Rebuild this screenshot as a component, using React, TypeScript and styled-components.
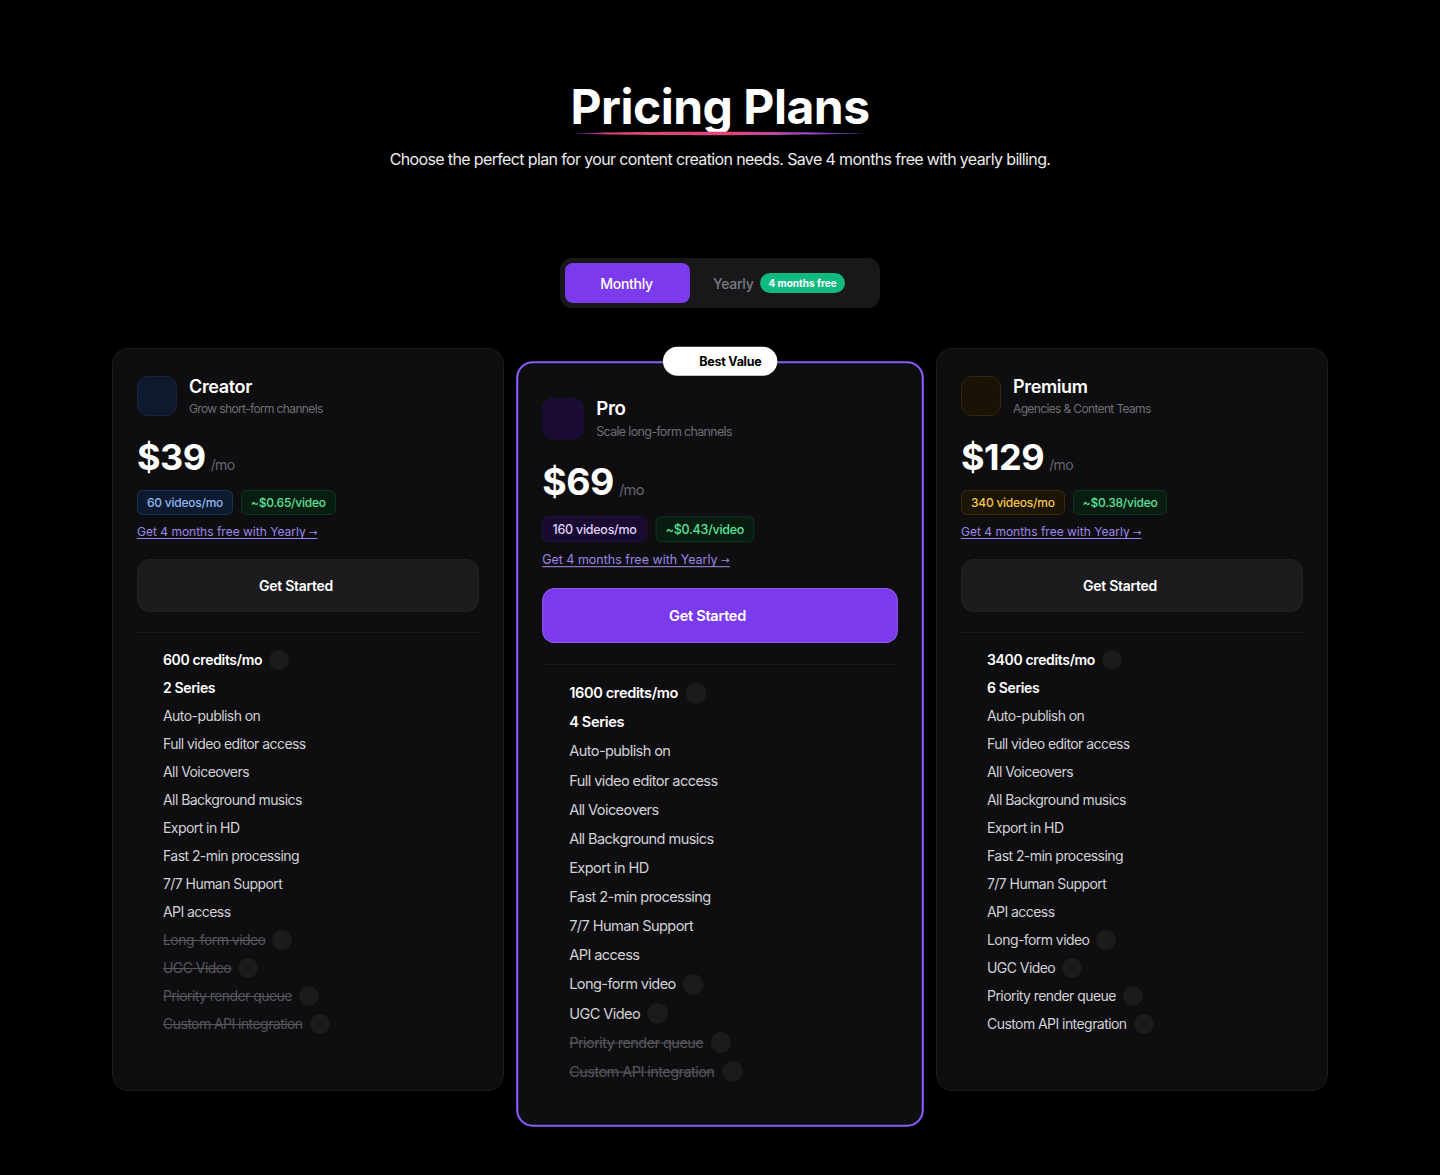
import React from 'react';
import styled, { createGlobalStyle, css } from 'styled-components';

type Tone = 'blue' | 'purple' | 'gold';

interface IFeature {
  label: string;
  strong?: boolean;
  dot?: boolean;
  off?: boolean;
}

interface IPlan {
  name: string;
  tagline: string;
  price: string;
  videos: string;
  perVideo: string;
  tone: Tone;
  featured?: boolean;
  features: IFeature[];
}

const toneColors: Record<Tone, { bg: string; border: string; text: string; icon: string; iconBorder: string }> = {
  blue: { bg: '#0b1a2f', border: '#1b3352', text: '#8fb8f2', icon: '#0d1a2e', iconBorder: '#17263d' },
  purple: { bg: '#190a30', border: '#231241', text: '#e2d4ff', icon: '#1a0b33', iconBorder: '#1f0f3b' },
  gold: { bg: '#1c1404', border: '#3a2b0c', text: '#f5c74f', icon: '#1a1204', iconBorder: '#33270d' },
};

const baseFeatures = (credits: string, series: string): IFeature[] => [
  { label: credits, strong: true, dot: true },
  { label: series, strong: true },
  { label: 'Auto-publish on' },
  { label: 'Full video editor access' },
  { label: 'All Voiceovers' },
  { label: 'All Background musics' },
  { label: 'Export in HD' },
  { label: 'Fast 2-min processing' },
  { label: '7/7 Human Support' },
  { label: 'API access' },
];

const extras = (enabled: number): IFeature[] =>
  ['Long-form video', 'UGC Video', 'Priority render queue', 'Custom API integration'].map((label, i) => ({
    label,
    dot: true,
    off: i >= enabled,
  }));

const plans: IPlan[] = [
  {
    name: 'Creator',
    tagline: 'Grow short-form channels',
    price: '$39',
    videos: '60 videos/mo',
    perVideo: '~$0.65/video',
    tone: 'blue',
    features: [...baseFeatures('600 credits/mo', '2 Series'), ...extras(0)],
  },
  {
    name: 'Pro',
    tagline: 'Scale long-form channels',
    price: '$69',
    videos: '160 videos/mo',
    perVideo: '~$0.43/video',
    tone: 'purple',
    featured: true,
    features: [...baseFeatures('1600 credits/mo', '4 Series'), ...extras(2)],
  },
  {
    name: 'Premium',
    tagline: 'Agencies & Content Teams',
    price: '$129',
    videos: '340 videos/mo',
    perVideo: '~$0.38/video',
    tone: 'gold',
    features: [...baseFeatures('3400 credits/mo', '6 Series'), ...extras(4)],
  },
];

const GlobalStyle = createGlobalStyle`
  * {
    box-sizing: border-box;
  }

  body {
    margin: 0;
    background: #000;
    font-family: Inter, "Noto Sans", sans-serif;
    letter-spacing: -0.04em;
    color: #fff;
  }
`;

const Page = styled.main`
  min-height: 1175px;
  padding-top: 78px;
  display: flex;
  flex-direction: column;
  align-items: center;
`;

const TitleWrap = styled.div`
  position: relative;
`;

const Title = styled.h1`
  margin: 0;
  font-size: 48px;
  line-height: 58px;
  font-weight: 700;
  letter-spacing: -0.5px;
  color: #fff;
`;

const Underline = styled.svg`
  position: absolute;
  left: 0;
  bottom: -1px;
  width: 100%;
  height: 8px;
`;

const Subtitle = styled.p`
  margin: 11px 0 0;
  font-size: 16px;
  line-height: 24px;
  color: #ececec;
`;

const Toggle = styled.div`
  margin-top: 87px;
  width: 320px;
  height: 50px;
  padding: 5px;
  display: flex;
  background: #18181b;
  border-radius: 12px;
`;

const ToggleButton = styled.button<{ $active?: boolean }>`
  border: none;
  border-radius: 8px;
  height: 40px;
  display: flex;
  align-items: center;
  gap: 7px;
  font-family: inherit;
  letter-spacing: -0.02em;
  font-size: 14px;
  font-weight: 500;
  cursor: pointer;

  ${({ $active }) =>
    $active
      ? css`
          width: 125px;
          padding-right: 8px;
          justify-content: center;
          background: #7c3aed;
          color: #fff;
        `
      : css`
          flex: 1;
          padding-left: 23px;
          background: transparent;
          color: #7a7a82;
        `}
`;

const FreeTag = styled.span`
  height: 20px;
  padding: 0 8px;
  display: inline-flex;
  align-items: center;
  border-radius: 10px;
  background: #10b981;
  color: #fff;
  font-size: 10px;
  font-weight: 700;
  letter-spacing: 0;
`;

const Cards = styled.section`
  margin-top: 40px;
  display: flex;
  align-items: flex-start;
  gap: 20px;
`;

const Card = styled.article<{ $featured?: boolean }>`
  position: relative;
  width: 392px;
  display: flex;
  flex-direction: column;
  background: #0e0e10;
  border-radius: 16px;

  ${({ $featured }) =>
    $featured
      ? css`
          margin-top: 28px;
          border: 2px solid #8b5cf6;
          padding: 33px 23px 41px;
          transform: scale(1.04);
          z-index: 1;
        `
      : css`
          border: 1px solid #1c1c20;
          padding: 27px 24px 56px;
        `}
`;

const BestValue = styled.div`
  position: absolute;
  top: -16px;
  left: 50%;
  transform: translateX(-50%);
  height: 28px;
  padding: 0 15px 0 35px;
  display: flex;
  align-items: center;
  border-radius: 14px;
  background: #fff;
  color: #000;
  font-size: 12px;
  font-weight: 700;
  letter-spacing: -0.02em;
  white-space: nowrap;
`;

const Head = styled.div`
  display: flex;
  gap: 12px;
`;

const PlanIcon = styled.div<{ $tone: Tone }>`
  width: 40px;
  height: 40px;
  flex-shrink: 0;
  border-radius: 11px;
  background: ${({ $tone }) => toneColors[$tone].icon};
  border: 1px solid ${({ $tone }) => toneColors[$tone].iconBorder};
`;

const PlanName = styled.h2`
  margin: -1px 0 0;
  font-size: 18px;
  line-height: 24px;
  font-weight: 600;
  letter-spacing: -0.02em;
`;

const Tagline = styled.p`
  margin: 2px 0 0;
  font-size: 12px;
  line-height: 16px;
  color: #6e6e76;
`;

const PriceRow = styled.div`
  margin-top: 20px;
  display: flex;
  align-items: baseline;
  gap: 5px;
`;

const Price = styled.span`
  font-size: 36px;
  line-height: 40px;
  font-weight: 700;
  letter-spacing: -0.5px;
`;

const Per = styled.span`
  font-size: 14px;
  color: #65656d;
`;

const Badges = styled.div`
  margin-top: 13px;
  display: flex;
  gap: 8px;
`;

const Badge = styled.span<{ $tone: Tone | 'green' }>`
  height: 25px;
  padding: 0 9px;
  display: inline-flex;
  align-items: center;
  border-radius: 6px;
  font-size: 12px;
  font-weight: 500;
  letter-spacing: -0.02em;

  ${({ $tone }) =>
    $tone === 'green'
      ? css`
          background: #061d10;
          border: 1px solid #0e3520;
          color: #5ee39a;
        `
      : css`
          background: ${toneColors[$tone].bg};
          border: 1px solid ${toneColors[$tone].border};
          color: ${toneColors[$tone].text};
        `}
`;

const YearlyLink = styled.a`
  margin-top: 9px;
  align-self: flex-start;
  font-size: 12px;
  line-height: 16px;
  letter-spacing: 0;
  color: #9d86e6;
  text-decoration: underline;
  text-underline-offset: 2px;
`;

const Arrow = styled.span`
  font-family: "DejaVu Sans", sans-serif;
  font-size: 10px;
`;

const StartButton = styled.button<{ $featured?: boolean }>`
  margin-top: 18px;
  height: 53px;
  width: 100%;
  padding-right: 30px;
  border-radius: 12px;
  font-family: inherit;
  letter-spacing: -0.02em;
  font-size: 14px;
  font-weight: 600;
  color: #fff;
  cursor: pointer;
  background: ${({ $featured }) => ($featured ? '#7c3aed' : '#1c1c1e')};
  border: 1px solid ${({ $featured }) => ($featured ? '#8f5cf4' : '#202023')};
`;

const Divider = styled.hr`
  margin: 20px 0 0;
  border: none;
  height: 1px;
  background: #1b1b1f;
`;

const FeatureList = styled.ul`
  margin: 17px 0 0;
  padding: 0 0 0 26px;
  list-style: none;
  display: flex;
  flex-direction: column;
  gap: 8px;
`;

const FeatureItem = styled.li<{ $strong?: boolean; $off?: boolean }>`
  display: flex;
  align-items: center;
  gap: 7px;
  font-size: 14px;
  line-height: 20px;
  font-weight: ${({ $strong }) => ($strong ? 600 : 400)};
  letter-spacing: ${({ $strong }) => ($strong ? '-0.025em' : '-0.04em')};
  color: ${({ $strong, $off }) => ($off ? '#56565e' : $strong ? '#fff' : '#d2d2d6')};

  span {
    text-decoration: ${({ $off }) => ($off ? 'line-through' : 'none')};
  }
`;

const Dot = styled.i`
  width: 20px;
  height: 20px;
  border-radius: 50%;
  background: #1b1b1e;
`;

const PlanCard = ({ plan }: { plan: IPlan }) => (
  <Card $featured={plan.featured}>
    {plan.featured && <BestValue>Best Value</BestValue>}
    <Head>
      <PlanIcon $tone={plan.tone} />
      <div>
        <PlanName>{plan.name}</PlanName>
        <Tagline>{plan.tagline}</Tagline>
      </div>
    </Head>
    <PriceRow>
      <Price>{plan.price}</Price>
      <Per>/mo</Per>
    </PriceRow>
    <Badges>
      <Badge $tone={plan.tone}>{plan.videos}</Badge>
      <Badge $tone="green">{plan.perVideo}</Badge>
    </Badges>
    <YearlyLink href="#">
      Get 4 months free with Yearly <Arrow>→</Arrow>
    </YearlyLink>
    <StartButton $featured={plan.featured}>Get Started</StartButton>
    <Divider />
    <FeatureList>
      {plan.features.map((f) => (
        <FeatureItem key={f.label} $strong={f.strong} $off={f.off}>
          <span>{f.label}</span>
          {f.dot && <Dot />}
        </FeatureItem>
      ))}
    </FeatureList>
  </Card>
);

const App = () => (
  <>
    <GlobalStyle />
    <Page>
      <TitleWrap>
        <Title>Pricing Plans</Title>
        <Underline viewBox="0 0 300 8" preserveAspectRatio="none">
          <defs>
            <linearGradient id="stroke" x1="0" x2="1" y1="0" y2="0">
              <stop offset="0" stopColor="#6d28d9" stopOpacity="0.6" />
              <stop offset="0.12" stopColor="#d9467f" />
              <stop offset="0.55" stopColor="#e0457b" />
              <stop offset="0.8" stopColor="#a347c9" />
              <stop offset="1" stopColor="#6d4ee8" stopOpacity="0.5" />
            </linearGradient>
          </defs>
          <path d="M2 4.6 C 60 2.2, 200 2.4, 298 4.4 C 200 6.6, 60 6.8, 2 4.6 Z" fill="url(#stroke)" />
        </Underline>
      </TitleWrap>
      <Subtitle>Choose the perfect plan for your content creation needs. Save 4 months free with yearly billing.</Subtitle>
      <Toggle>
        <ToggleButton $active>Monthly</ToggleButton>
        <ToggleButton>
          Yearly <FreeTag>4 months free</FreeTag>
        </ToggleButton>
      </Toggle>
      <Cards>
        {plans.map((p) => (
          <PlanCard key={p.name} plan={p} />
        ))}
      </Cards>
    </Page>
  </>
);

export default App;
